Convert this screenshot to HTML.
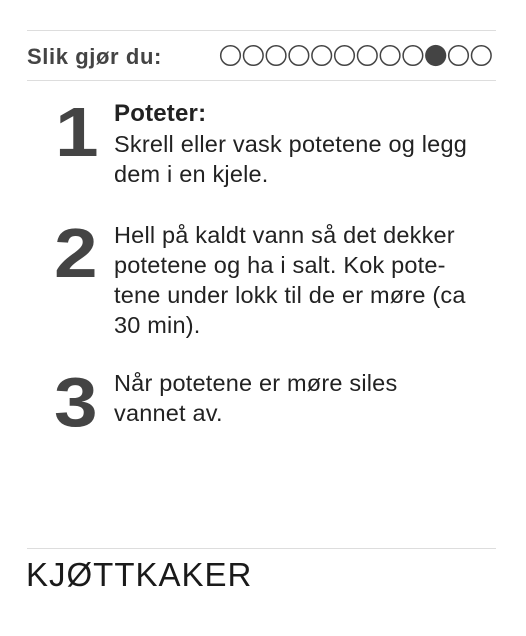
<!DOCTYPE html>
<html><head><meta charset="utf-8"><style>
body{margin:0;width:526px;height:636px;background:#fff;font-family:"Liberation Sans",Arial,sans-serif;position:relative;overflow:hidden;color:#222}
.hr{position:absolute;left:27px;width:469px;height:1px;background:#ddd}
.a{position:absolute;white-space:nowrap}
.num{position:absolute;font-weight:bold;font-size:70px;color:#444;line-height:1;transform:scaleX(1.12);transform-origin:left top}
.t{position:absolute;left:114px;font-size:23.5px;letter-spacing:0.2px;line-height:30px;color:#222;white-space:nowrap}
</style></head><body>
<div class="hr" style="top:30px"></div>
<div class="hr" style="top:80px"></div>
<div class="a" style="left:27px;top:44px;font-size:22px;letter-spacing:0.6px;font-weight:bold;color:#444">Slik gjør du:</div>
<svg style="position:absolute;left:219px;top:44px" width="278" height="24">
<g fill="none" stroke="#444" stroke-width="1.5">
<circle cx="11.5" cy="11.5" r="9.8"/><circle cx="34.3" cy="11.5" r="9.8"/><circle cx="57.1" cy="11.5" r="9.8"/><circle cx="79.9" cy="11.5" r="9.8"/><circle cx="102.7" cy="11.5" r="9.8"/><circle cx="125.5" cy="11.5" r="9.8"/><circle cx="148.3" cy="11.5" r="9.8"/><circle cx="171.1" cy="11.5" r="9.8"/><circle cx="193.9" cy="11.5" r="9.8"/><circle cx="239.5" cy="11.5" r="9.8"/><circle cx="262.3" cy="11.5" r="9.8"/>
</g><circle cx="216.7" cy="11.5" r="10.6" fill="#444"/></svg>
<div class="num" style="left:55px;top:97px">1</div>
<div class="t" style="top:98px"><b style="font-size:24px">Poteter:</b><br>Skrell eller vask potetene og legg<br>dem i en kjele.</div>
<div class="num" style="left:54px;top:218px">2</div>
<div class="t" style="top:220px">Hell på kaldt vann så det dekker<br>potetene og ha i salt. Kok pote-<br>tene under lokk til de er møre (ca<br>30 min).</div>
<div class="num" style="left:54px;top:367px">3</div>
<div class="t" style="top:368px">Når potetene er møre siles<br>vannet av.</div>
<div class="hr" style="top:548px"></div>
<div class="a" style="left:26px;top:556px;font-size:33px;letter-spacing:1px;color:#1a1a1a">KJØTTKAKER</div>
</body></html>
